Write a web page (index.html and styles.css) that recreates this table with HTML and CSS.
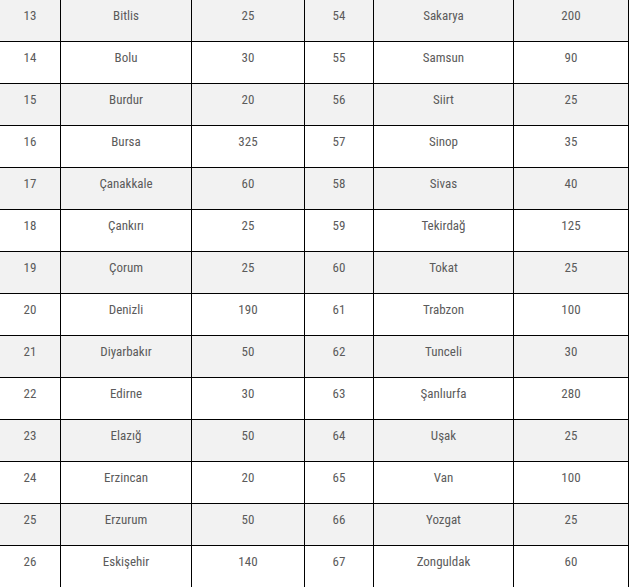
FILE: index.html
```html
<!DOCTYPE html>
<html lang="tr">
<head>
<meta charset="utf-8">
<link rel="stylesheet" href="styles.css">
</head>
<body>
<table class="fees">
  <colgroup>
    <col class="c1"><col class="c2"><col class="c3"><col class="c4"><col class="c5"><col class="c6">
  </colgroup>
  <tbody>
    <tr class="alt"><td>13</td><td>Bitlis</td><td>25</td><td>54</td><td>Sakarya</td><td>200</td></tr>
    <tr><td>14</td><td>Bolu</td><td>30</td><td>55</td><td>Samsun</td><td>90</td></tr>
    <tr class="alt"><td>15</td><td>Burdur</td><td>20</td><td>56</td><td>Siirt</td><td>25</td></tr>
    <tr><td>16</td><td>Bursa</td><td>325</td><td>57</td><td>Sinop</td><td>35</td></tr>
    <tr class="alt"><td>17</td><td>Çanakkale</td><td>60</td><td>58</td><td>Sivas</td><td>40</td></tr>
    <tr><td>18</td><td>Çankırı</td><td>25</td><td>59</td><td>Tekirdağ</td><td>125</td></tr>
    <tr class="alt"><td>19</td><td>Çorum</td><td>25</td><td>60</td><td>Tokat</td><td>25</td></tr>
    <tr><td>20</td><td>Denizli</td><td>190</td><td>61</td><td>Trabzon</td><td>100</td></tr>
    <tr class="alt"><td>21</td><td>Diyarbakır</td><td>50</td><td>62</td><td>Tunceli</td><td>30</td></tr>
    <tr><td>22</td><td>Edirne</td><td>30</td><td>63</td><td>Şanlıurfa</td><td>280</td></tr>
    <tr class="alt"><td>23</td><td>Elazığ</td><td>50</td><td>64</td><td>Uşak</td><td>25</td></tr>
    <tr><td>24</td><td>Erzincan</td><td>20</td><td>65</td><td>Van</td><td>100</td></tr>
    <tr class="alt"><td>25</td><td>Erzurum</td><td>50</td><td>66</td><td>Yozgat</td><td>25</td></tr>
    <tr><td>26</td><td>Eskişehir</td><td>140</td><td>67</td><td>Zonguldak</td><td>60</td></tr>
  </tbody>
</table>
</body>
</html>
```
FILE: styles.css
```css
html, body {
  margin: 0;
  padding: 0;
  background: #fff;
  overflow: hidden;
}

.fees {
  margin: -1px 0 0 -1px;
  width: 630px;
  table-layout: fixed;
  border-collapse: separate;
  border-spacing: 0;
  border-top: 1px solid #000;
  border-left: 1px solid #000;
  font-family: Roboto, "Noto Sans", sans-serif;
  font-stretch: 85%;
  font-size: 13px;
  line-height: 20px;
  color: #5b5b5b;
}

.c1 { width: 61px; }
.c2 { width: 131px; }
.c3 { width: 113px; }
.c4 { width: 69px; }
.c5 { width: 140px; }
.c6 { width: 115px; }

.fees td {
  box-sizing: border-box;
  height: 42px;
  padding: 6px 4px 0;
  vertical-align: top;
  text-align: center;
  border-right: 1px solid #000;
  border-bottom: 1px solid #000;
}

.fees tr.alt td {
  background: #f2f2f2;
}
```
